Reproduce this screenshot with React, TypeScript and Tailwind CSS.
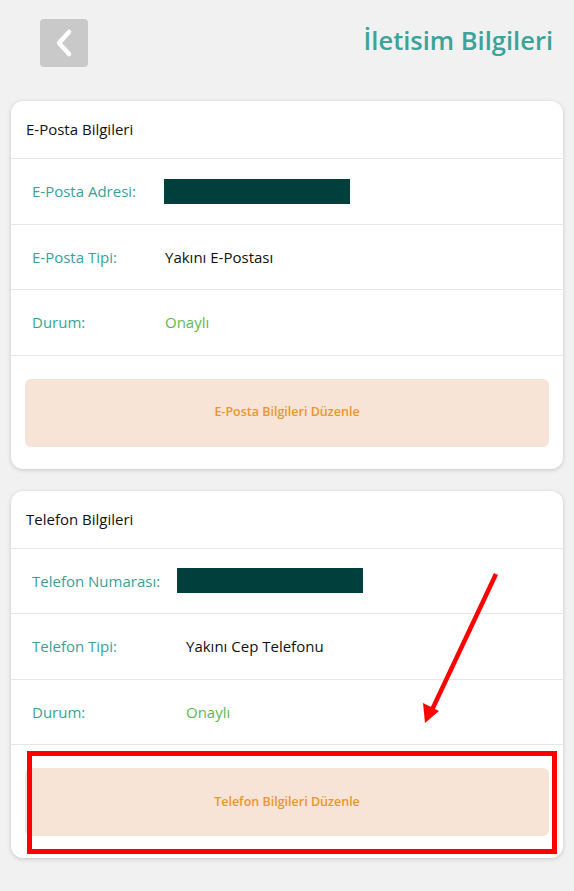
import React from "react";

const font = { fontFamily: "'Open Sans', 'Noto Sans', sans-serif" };

function Row({ label, value, valueClass, pl, box, boxPl }: { label: string; value?: string; valueClass?: string; pl: string; box?: boolean; boxPl?: string }) {
  return (
    <div className="flex h-[65.5px] items-center border-b border-[#e6e6e6] pl-[21px]">
      <div className="text-[15px] text-[#3a9f97]">{label}</div>
      {box ? (
        <div className={`absolute ${boxPl}`}>
          <div className="h-[25px] w-[186px] bg-[#003f3b]" />
        </div>
      ) : (
        <div className={`absolute text-[15px] ${pl} ${valueClass}`}>{value}</div>
      )}
    </div>
  );
}

function Card({
  title,
  rows,
  button,
  highlight,
}: {
  title: string;
  rows: React.ReactNode;
  button: string;
  highlight?: boolean;
}) {
  return (
    <div className="mx-[11px] rounded-[12px] bg-white shadow-[0_1px_4px_rgba(0,0,0,0.18)]">
      <div className="flex h-[58px] items-center border-b border-[#e6e6e6] pl-[15px] text-[15px] font-medium text-[#111]">
        {title}
      </div>
      {rows}
      <div className="relative px-[14px] pb-[22px] pt-[23px]">
        <div className="flex h-[68px] items-center justify-center rounded-[6px] bg-[#f8e4d7] text-[12.5px] font-semibold text-[#e9962b]">
          {button}
        </div>
        {highlight && (
          <div className="pointer-events-none absolute left-[16px] right-[6px] top-[6px] bottom-[4px] border-[5px] border-[#ff0000]" />
        )}
      </div>
    </div>
  );
}

export default function App() {
  return (
    <div className="relative min-h-[891px] w-full bg-[#f2f1f2] pb-[34px]" style={font}>
      <div className="flex h-[101px] items-start justify-between pl-[40px] pr-[21px] pt-[19px]">
        <div className="flex h-[48px] w-[48px] items-center justify-center rounded-[4px] bg-[#c9c9c9]">
          <svg width="22" height="30" viewBox="0 0 22 30" fill="none">
            <path d="M16 4 L6 15 L16 26" stroke="#fff" strokeWidth="4.5" strokeLinecap="round" strokeLinejoin="round" />
          </svg>
        </div>
        <div className="mt-[2px] text-[25.5px] font-semibold text-[#3aa39a]">İletisim Bilgileri</div>
      </div>

      <div className="relative">
        <Card
          title="E-Posta Bilgileri"
          button="E-Posta Bilgileri Düzenle"
          rows={
            <div className="relative">
              <div className="relative">
                <Row label="E-Posta Adresi:" pl="left-[154px]" box boxPl="left-[153px]" />
              </div>
              <div className="relative">
                <Row label="E-Posta Tipi:" value="Yakını E-Postası" valueClass="text-[#111]" pl="left-[154px]" />
              </div>
              <div className="relative">
                <Row label="Durum:" value="Onaylı" valueClass="text-[#5cb84f]" pl="left-[154px]" />
              </div>
            </div>
          }
        />
      </div>

      <div className="mt-[22px]">
        <Card
          title="Telefon Bilgileri"
          button="Telefon Bilgileri Düzenle"
          highlight
          rows={
            <div>
              <div className="relative">
                <Row label="Telefon Numarası:" pl="left-[175px]" box boxPl="left-[166px]" />
              </div>
              <div className="relative">
                <Row label="Telefon Tipi:" value="Yakını Cep Telefonu" valueClass="text-[#111]" pl="left-[175px]" />
              </div>
              <div className="relative">
                <Row label="Durum:" value="Onaylı" valueClass="text-[#5cb84f]" pl="left-[175px]" />
              </div>
            </div>
          }
        />
      </div>

      <svg className="pointer-events-none absolute left-0 top-0" width="574" height="891" viewBox="0 0 574 891">
        <line x1="496" y1="574" x2="431" y2="712" stroke="#ff0000" strokeWidth="4.5" />
        <polygon points="425,723 423,703 439,711" fill="#ff0000" />
      </svg>
    </div>
  );
}
